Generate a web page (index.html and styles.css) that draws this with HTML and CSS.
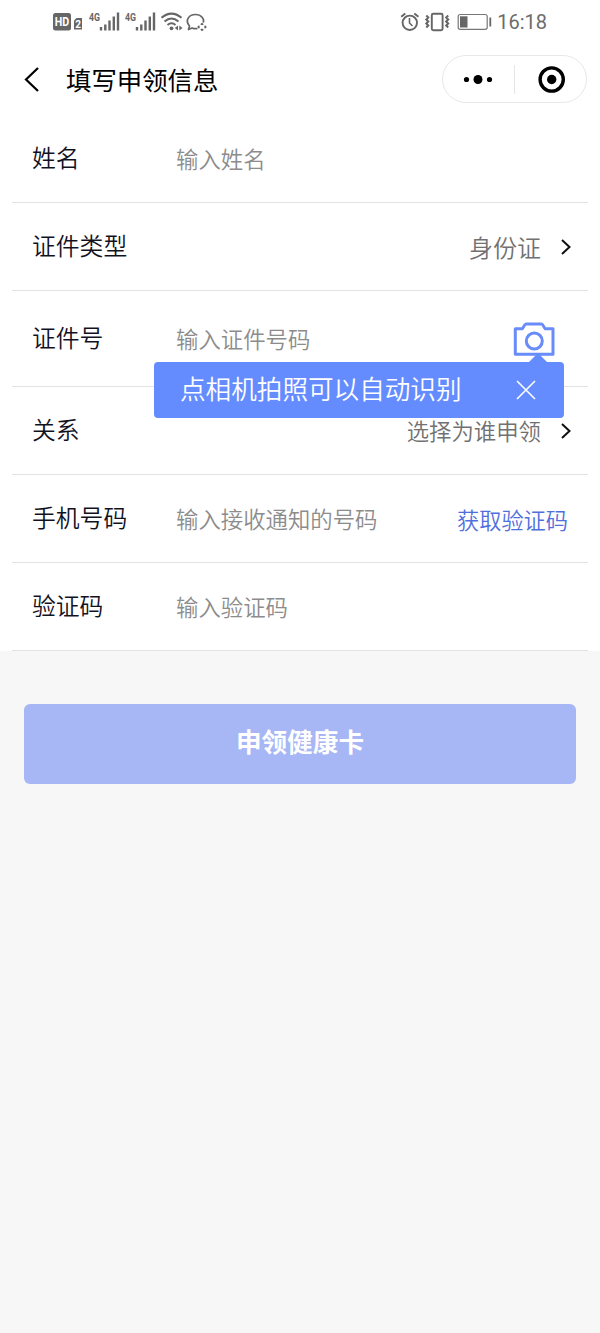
FILE: index.html
```html
<!DOCTYPE html>
<html lang="zh-CN">
	<head>
		<meta charset="UTF-8">
		<title>填写申领信息</title>
		<link rel="stylesheet" href="styles.css">
	</head>
	<body>
		<div class="status">
			<svg width="160" height="24" viewBox="50 10 160 24">
				<!-- HD 2 -->
				<rect x="53" y="13" width="18" height="17.5" rx="2.5" fill="#666"/>
				<text x="62" y="26.2" class="hd" textLength="14.5" lengthAdjust="spacingAndGlyphs">HD</text>
				<path d="M76.500 18H82V29.500H74V20.500Z" fill="#666"/>
				<text x="78" y="27.600" class="sim">2</text>
				<!-- signal -->
				<text x="89" y="20.800" class="net" textLength="11" lengthAdjust="spacingAndGlyphs">4G</text>
				<path d="M101 27V30.500M105.300 24.500V30.500M109.500 20.500V30.500M113.800 16.500V30.500M118 12.500V30.500" stroke="#666" stroke-width="2.400"/>
				<text x="125" y="20.800" class="net" textLength="11" lengthAdjust="spacingAndGlyphs">4G</text>
				<path d="M137 27V30.500M141.300 24.500V30.500M145.500 20.500V30.500M149.800 16.500V30.500M154 12.500V30.500" stroke="#666" stroke-width="2.400"/>
				<!-- wifi -->
				<g fill="none" stroke="#666" stroke-width="2">
					<path d="M161.500 17.800Q171.500 9.500 181.500 17.800M164.500 21.500Q171.500 15.500 178.500 21.500M167.500 25Q171.500 21.500 175.500 25"/>
				</g>
				<circle cx="171.500" cy="28.300" r="1.900" fill="#666"/>
				<path d="M178 25.500V30.500L174.800 28ZM179.300 25.500V30.500L182.500 28Z" fill="#666"/>
				<!-- message -->
				<path d="M197.500 28.500C195 29 193.500 28.600 192 27.900L188.500 29.500L189.500 26C184.500 20.500 189 14.500 195.500 14.500C201.500 14.500 204.500 19 203.300 22.500" fill="none" stroke="#666" stroke-width="1.700" stroke-linejoin="round"/>
				<path d="M200.800 24.700L202 23.500L203.200 24.700M199.400 25.700L198.200 26.900L199.400 28.100M204.600 25.700L205.800 26.900L204.600 28.100M200.800 29.100L202 30.300L203.200 29.100" fill="none" stroke="#666" stroke-width="1.500"/>
			</svg>
			<div class="status-right">
				<svg width="96" height="24" viewBox="399 10 96 24">
					<!-- alarm -->
					<g fill="none" stroke="#666" stroke-width="1.900">
						<circle cx="409.800" cy="22.800" r="7.200"/>
						<path d="M409.500 18V23L412.500 26" stroke-width="1.600"/>
						<path d="M401.200 16.800L405.300 13.400M414.300 13.400L418.400 16.800"/>
					</g>
					<!-- vibrate -->
					<rect x="431.800" y="13.800" width="10.800" height="16.400" rx="1.500" fill="none" stroke="#666" stroke-width="1.900"/>
					<path d="M426.300 15.500L428.300 17.500L426.300 19.500L428.300 21.500L426.300 23.500L428.300 25.500L426.300 27.500M448.200 15.500L446.200 17.500L448.200 19.500L446.200 21.500L448.200 23.500L446.200 25.500L448.200 27.500" fill="none" stroke="#666" stroke-width="2"/>
					<!-- battery -->
					<rect x="458.200" y="14.500" width="29" height="14.800" rx="2" fill="none" stroke="#777" stroke-width="1.200"/>
					<rect x="460" y="16.300" width="7.500" height="11.200" fill="#666"/>
					<path d="M490.300 17.500V26.500" stroke="#666" stroke-width="1.800"/>
				</svg>
				<span class="time">16:18</span>
			</div>
		</div>

		<div class="nav">
			<svg class="back" width="16" height="26" viewBox="0 0 16 26"><path d="M14 1L2 12.500L14 24"/></svg>
			<h1>填写申领信息</h1>
			<div class="capsule">
				<svg width="71" height="46" viewBox="0 0 71 46">
					<circle cx="23.500" cy="23.500" r="2.600"/>
					<circle cx="35" cy="23.500" r="4.500"/>
					<circle cx="46.500" cy="23.500" r="2.600"/>
				</svg>
				<i></i>
				<svg width="71" height="46" viewBox="0 0 71 46">
					<circle cx="36.700" cy="23.500" r="11.600" fill="none" stroke="#000" stroke-width="3.400"/>
					<circle cx="36.700" cy="23.500" r="4.700"/>
				</svg>
			</div>
		</div>

		<div class="form">
			<div class="row">
				<label>姓名</label>
				<span class="placeholder">输入姓名</span>
			</div>
			<div class="row">
				<label>证件类型</label>
				<span class="value big">身份证</span>
				<svg class="arrow" width="10" height="16" viewBox="0 0 10 16"><path d="M1 1L8.500 8L1 15"/></svg>
			</div>
			<div class="row row-id">
				<label>证件号</label>
				<span class="placeholder">输入证件号码</span>
				<svg class="camera" width="42" height="36" viewBox="0 0 42 36">
					<path d="M2.300 7.800H9C10.500 7.800 11 3 13 3H28.500C30.500 3 31 7.800 32.500 7.800H40V33.300H2.300Z"/>
					<circle cx="21.300" cy="20" r="8"/>
				</svg>
				<div class="tip">
					<span>点相机拍照可以自动识别</span>
					<svg width="20" height="20" viewBox="0 0 20 20"><path d="M1 1L19 19M19 1L1 19"/></svg>
				</div>
			</div>
			<div class="row">
				<label>关系</label>
				<span class="value">选择为谁申领</span>
				<svg class="arrow" width="10" height="16" viewBox="0 0 10 16"><path d="M1 1L8.500 8L1 15"/></svg>
			</div>
			<div class="row">
				<label>手机号码</label>
				<span class="placeholder">输入接收通知的号码</span>
				<a class="code">获取验证码</a>
			</div>
			<div class="row">
				<label>验证码</label>
				<span class="placeholder">输入验证码</span>
			</div>
		</div>

		<div class="submit">申领健康卡</div>
	</body>
</html>
```

FILE: styles.css
```css
*{
	box-sizing: border-box;
}
body{
	margin: 0;
	min-height: 1333px;
	background: #f7f7f7;
	font-family: "Noto Sans CJK SC", sans-serif;
	font-weight: 350;
}
svg{
	display: block;
	flex: none;
}

/* status bar */
.status{
	display: flex;
	justify-content: space-between;
	height: 44px;
	padding: 10px 53px 0 50px;
	background: #fff;
}
.status-right{
	display: flex;
}
.status text{
	font-family: Roboto, sans-serif;
}
.hd{
	font-size: 12px;
	font-weight: 700;
	fill: #fff;
	text-anchor: middle;
}
.sim{
	font-size: 10px;
	font-weight: 700;
	fill: #fff;
	text-anchor: middle;
}
.net{
	font-size: 11.5px;
	font-weight: 700;
	fill: #666;
}
.time{
	margin-left: 2px;
	font: 400 20px/25px Roboto, sans-serif;
	color: #6c6c6c;
}

/* title bar */
.nav{
	display: flex;
	align-items: center;
	height: 71px;
	padding: 0 13px 0 24px;
	background: #fff;
}
.back path{
	fill: none;
	stroke: #000;
	stroke-width: 2.2;
}
.nav h1{
	margin: 0 0 0 26px;
	padding-bottom: 1px;
	font-size: 25.4px;
	font-weight: 400;
	line-height: 36px;
	color: #000;
}
.capsule{
	display: flex;
	align-items: center;
	margin: 0 0 1px auto;
	width: 145px;
	height: 48px;
	border: 1px solid #e8e8e8;
	border-radius: 24px;
}
.capsule i{
	flex: none;
	width: 1px;
	height: 29px;
	background: #e5e5e5;
}

/* form */
.form{
	padding: 0 12px;
	background: #fff;
}
.row{
	display: flex;
	align-items: center;
	position: relative;
	height: 88px;
	padding: 0 20px;
	border-bottom: 1px solid #e3e3e3;
}
.row-id{
	height: 96px;
}
.row label{
	width: 144px;
	padding-bottom: 4px;
	font-size: 23.8px;
	color: #12121f;
}
.placeholder{
	padding-bottom: 2px;
	font-size: 22.4px;
	color: #8c8c8c;
}
.value{
	margin-left: auto;
	padding-bottom: 2px;
	font-size: 22.4px;
	color: #717171;
}
.big{
	padding-bottom: 0;
	font-size: 24px;
}
.arrow{
	margin: 0 -3px 0 20px;
}
.arrow path{
	fill: none;
	stroke: #111;
	stroke-width: 2;
}
.camera{
	margin: 0 13px 0 auto;
}
.camera path,
.camera circle{
	fill: none;
	stroke: #6a8cf8;
	stroke-width: 3;
	stroke-linejoin: round;
}
.code{
	margin-left: auto;
	font-size: 22.2px;
	color: #4f6fdc;
}

/* tip under the camera */
.tip{
	display: flex;
	align-items: center;
	justify-content: space-between;
	position: absolute;
	z-index: 1;
	left: 142px;
	top: 71px;
	width: 410px;
	height: 56px;
	padding: 0 28px 0 26px;
	border-radius: 4px;
	background: #658cff;
	font-size: 25.6px;
	color: #fff;
}
.tip span{
	padding-bottom: 5px;
}
.tip:before{
	content: "";
	position: absolute;
	right: 16px;
	top: -9px;
	border: 10px solid transparent;
	border-top: 0;
	border-bottom-color: #658cff;
}
.tip path{
	fill: none;
	stroke: #fff;
	stroke-width: 1.6;
}

.submit{
	margin: 53px 24px 0;
	height: 80px;
	border-radius: 6px;
	background: #a7b6f4;
	font-size: 25.6px;
	font-weight: 700;
	line-height: 74px;
	text-align: center;
	color: #fff;
}
```
